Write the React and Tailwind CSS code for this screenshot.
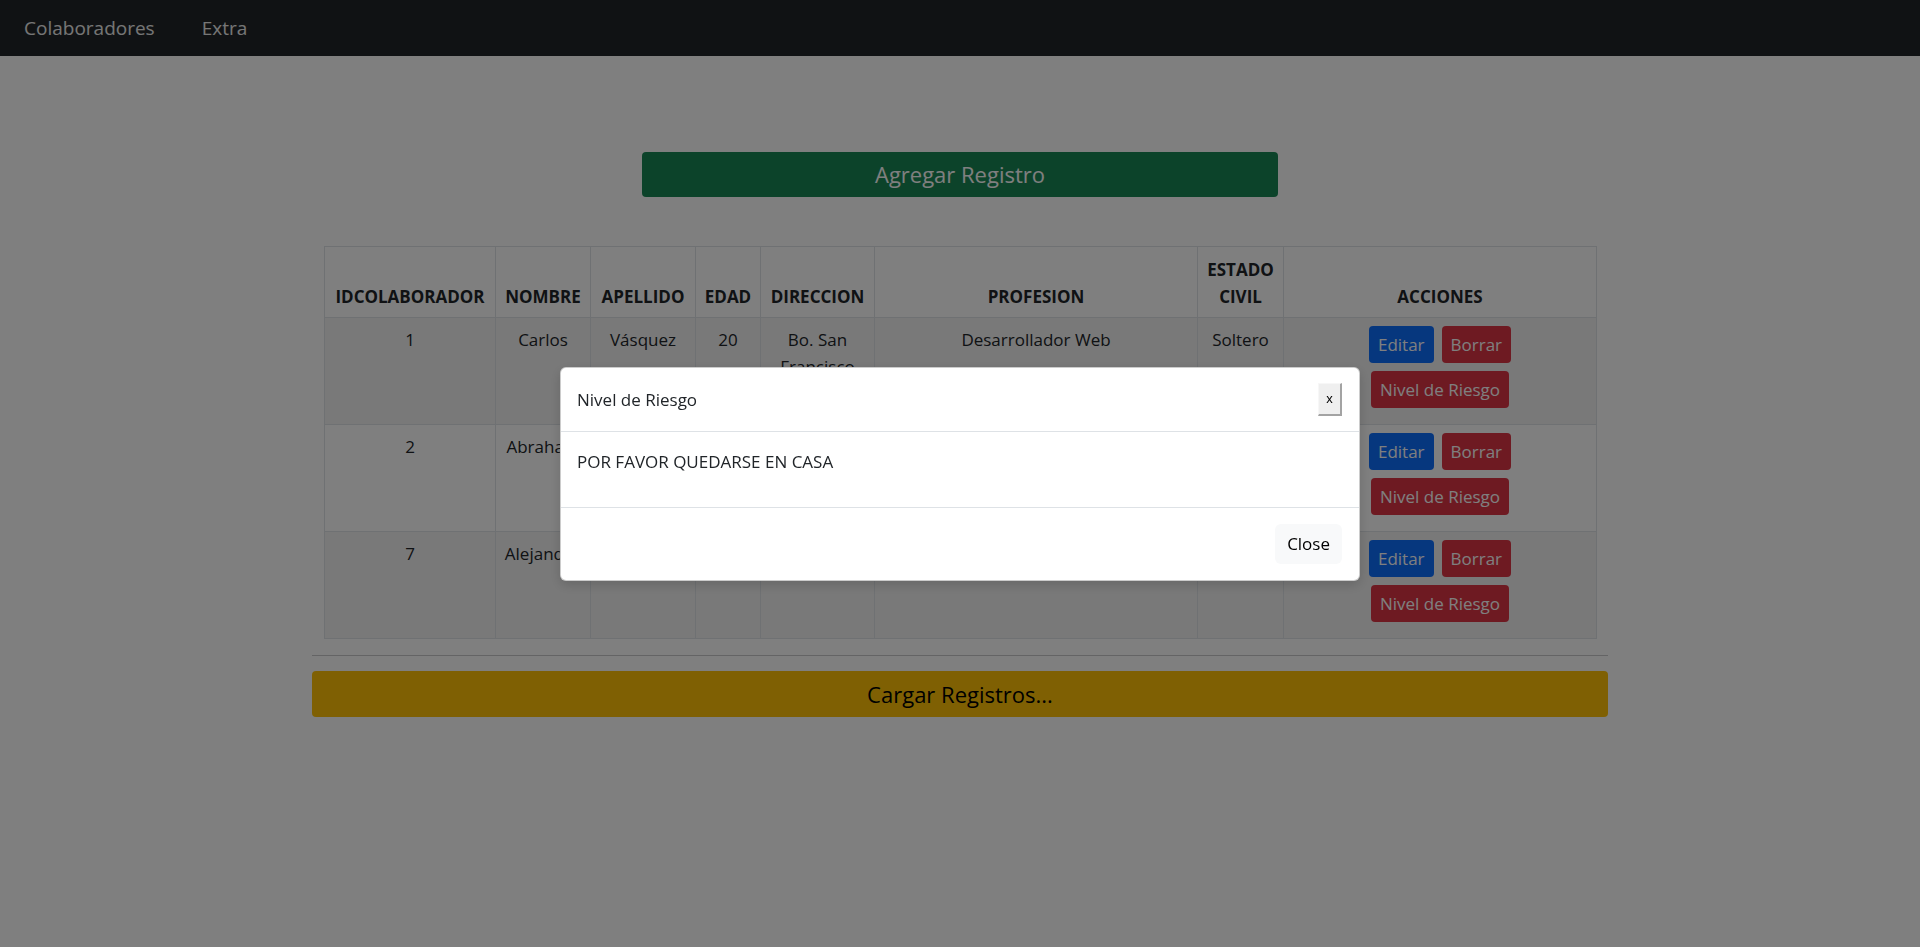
export default function App() {
  const rows = [
    { id: 1, nombre: "Carlos", apellido: "Vásquez", edad: 20, dir: "Bo. San Francisco", prof: "Desarrollador Web", civil: "Soltero", striped: true },
    { id: 2, nombre: "Abraham", apellido: "Martínez", edad: 25, dir: "Col. Centro", prof: "Contador", civil: "Casado", striped: false },
    { id: 7, nombre: "Alejandro", apellido: "López", edad: 30, dir: "Centro", prof: "Ingeniero", civil: "Soltero", striped: true },
  ];
  const th = "border border-[#dee2e6] px-[8px] pt-[9px] pb-[7px] text-center align-bottom font-bold leading-[27px]";
  const td = "border border-[#dee2e6] px-[8px] pt-[8px] pb-[8px] text-center align-top leading-[27px]";

  return (
    <div className="min-h-screen bg-white font-['Open_Sans',sans-serif] text-[#212529] text-[17px]">
      <nav className="h-[56px] bg-[#212529] flex items-center">
        <span className="ml-[24px] text-[19px] text-[#ececec]">Colaboradores</span>
        <span className="ml-[47px] text-[19px] text-[#ececec]">Extra</span>
      </nav>

      <div className="w-[1320px] mx-auto px-[12px]">
        <div className="pt-[96px] flex justify-center">
          <button className="w-[636px] h-[45px] bg-[#198754] rounded-[4px] text-white text-[22px] flex items-center justify-center">
            Agregar Registro
          </button>
        </div>

        <div className="mt-[49px] px-[12px]">
          <table className="w-[1272px] table-fixed border-collapse">
            <colgroup>
              <col className="w-[171px]" />
              <col className="w-[95px]" />
              <col className="w-[105px]" />
              <col className="w-[65px]" />
              <col className="w-[114px]" />
              <col className="w-[323px]" />
              <col className="w-[86px]" />
              <col className="w-[313px]" />
            </colgroup>
            <thead>
              <tr className="bg-white">
                <th className={th + " whitespace-nowrap"}>IDCOLABORADOR</th>
                <th className={th + " whitespace-nowrap"}>NOMBRE</th>
                <th className={th + " whitespace-nowrap"}>APELLIDO</th>
                <th className={th + " whitespace-nowrap"}>EDAD</th>
                <th className={th + " whitespace-nowrap"}>DIRECCION</th>
                <th className={th + " whitespace-nowrap"}>PROFESION</th>
                <th className={th}>ESTADO CIVIL</th>
                <th className={th + " whitespace-nowrap"}>ACCIONES</th>
              </tr>
            </thead>
            <tbody>
              {rows.map((r) => (
                <tr key={r.id} className={r.striped ? "bg-[#f2f2f2]" : "bg-white"}>
                  <td className={td}>{r.id}</td>
                  <td className={td}>{r.nombre}</td>
                  <td className={td}>{r.apellido}</td>
                  <td className={td}>{r.edad}</td>
                  <td className={td}>{r.dir}</td>
                  <td className={td}>{r.prof}</td>
                  <td className={td}>{r.civil}</td>
                  <td className="border border-[#dee2e6] px-[8px] pt-[8px] pb-[16px] align-top">
                    <div className="flex justify-center gap-[8px]">
                      <button className="h-[37px] px-[9px] rounded-[4px] bg-[#0d6efd] text-white leading-[27px]">Editar</button>
                      <button className="h-[37px] px-[9px] rounded-[4px] bg-[#dc3545] text-white leading-[27px]">Borrar</button>
                    </div>
                    <div className="flex justify-center mt-[8px]">
                      <button className="h-[37px] px-[9px] rounded-[4px] bg-[#dc3545] text-white leading-[27px]">Nivel de Riesgo</button>
                    </div>
                  </td>
                </tr>
              ))}
            </tbody>
          </table>
        </div>

        <div className="mt-[16px] h-px bg-[#c8c9ca]" />
        <button className="mt-[15px] w-full h-[46px] bg-[#ffc107] rounded-[4px] text-black text-[22px] flex items-center justify-center">
          Cargar Registros...
        </button>
      </div>

      <div className="fixed inset-0 bg-black/50" />

      <div className="fixed inset-0 flex items-center justify-center">
        <div className="w-[800px] bg-white rounded-[6px] border border-black/20 shadow-[0_4px_12px_rgba(0,0,0,0.15)]">
          <div className="h-[64px] flex items-center justify-between pl-[16px] pr-[17px] border-b border-[#dee2e6]">
            <span className="text-[17px] leading-[27px] text-[#212529]">Nivel de Riesgo</span>
            <button className="w-[24px] h-[33px] bg-[#efefef] border-t border-l border-t-[#f7f7f7] border-l-[#f7f7f7] border-r-2 border-b-2 border-r-[#a3a3a3] border-b-[#a3a3a3] text-[13px] leading-none font-['Liberation_Sans',sans-serif] text-black flex items-center justify-center">
              x
            </button>
          </div>
          <div className="px-[16px] pt-[16px] pb-[16px] border-b border-[#dee2e6]">
            <p className="mb-[16px] text-[17px] leading-[27px] text-[#212529]">POR FAVOR QUEDARSE EN CASA</p>
          </div>
          <div className="h-[72px] flex items-center justify-end pr-[17px]">
            <button className="h-[40px] px-[12px] rounded-[6px] bg-[#f8f9fa] text-black text-[17px] leading-[27px]">Close</button>
          </div>
        </div>
      </div>
    </div>
  );
}
